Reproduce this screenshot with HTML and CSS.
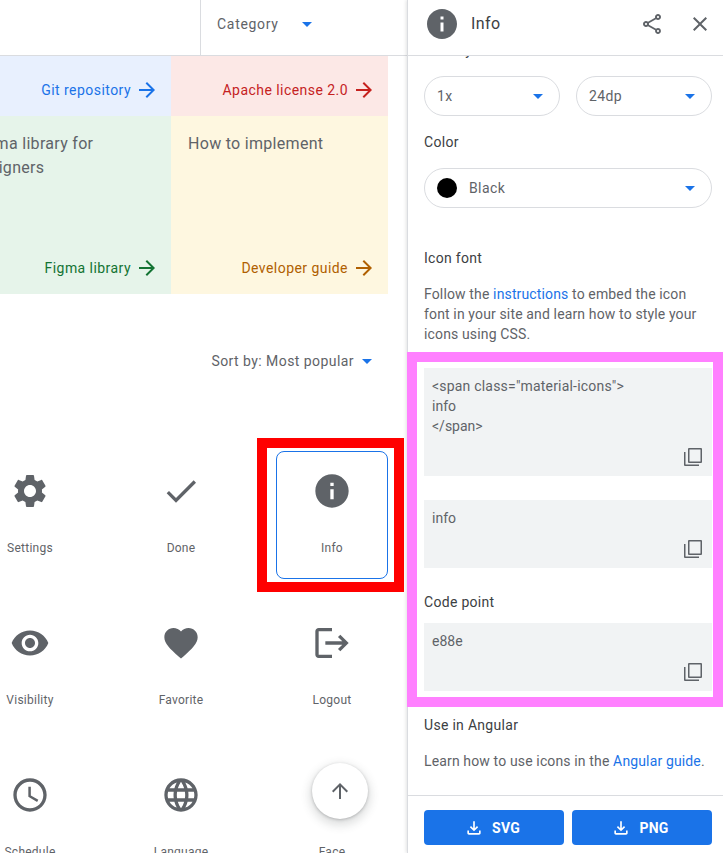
FILE: index.html
```html
<!DOCTYPE html>
<html lang="en">

<head>
  <meta charset="UTF-8" />
  <title>Info icon</title>
  <link rel="stylesheet" href="styles.css">
</head>

<body>
  <div class="page">
    <main class="main">
      <div class="topbar">
        <div class="category">
          <span>Category</span>
          <span class="caret"></span>
        </div>
      </div>

      <div class="cards">
        <div class="card card-blue link-only">
          <a class="card-link">Git repository
            <svg viewBox="0 0 24 24"><path d="M12 4l-1.41 1.41L16.17 11H4v2h12.17l-5.58 5.59L12 20l8-8z" /></svg>
          </a>
        </div>
        <div class="card card-red link-only">
          <a class="card-link">Apache license 2.0
            <svg viewBox="0 0 24 24"><path d="M12 4l-1.41 1.41L16.17 11H4v2h12.17l-5.58 5.59L12 20l8-8z" /></svg>
          </a>
        </div>
        <div class="card card-green">
          <p class="card-title">Figma library for designers</p>
          <a class="card-link">Figma library
            <svg viewBox="0 0 24 24"><path d="M12 4l-1.41 1.41L16.17 11H4v2h12.17l-5.58 5.59L12 20l8-8z" /></svg>
          </a>
        </div>
        <div class="card card-yellow">
          <p class="card-title">How to implement</p>
          <a class="card-link">Developer guide
            <svg viewBox="0 0 24 24"><path d="M12 4l-1.41 1.41L16.17 11H4v2h12.17l-5.58 5.59L12 20l8-8z" /></svg>
          </a>
        </div>
      </div>

      <div class="sort">
        <span>Sort by: Most popular</span>
        <span class="caret"></span>
      </div>

      <div class="icons">
        <div class="icon-cell">
          <svg viewBox="0 0 24 24"><path d="M19.14,12.94c0.04-0.3,0.06-0.61,0.06-0.94c0-0.32-0.02-0.64-0.07-0.94l2.03-1.58c0.18-0.14,0.23-0.41,0.12-0.61l-1.92-3.32c-0.12-0.22-0.37-0.29-0.59-0.22l-2.39,0.96c-0.5-0.38-1.03-0.7-1.62-0.94L14.4,2.81c-0.04-0.24-0.24-0.41-0.48-0.41h-3.84c-0.24,0-0.43,0.17-0.47,0.41L9.25,5.35C8.66,5.59,8.12,5.92,7.63,6.29L5.24,5.33c-0.22-0.08-0.47,0-0.59,0.22L2.74,8.87C2.62,9.08,2.66,9.34,2.86,9.48l2.03,1.58C4.84,11.36,4.8,11.69,4.8,12s0.02,0.64,0.07,0.94l-2.03,1.58c-0.18,0.14-0.23,0.41-0.12,0.61l1.92,3.32c0.12,0.22,0.37,0.29,0.59,0.22l2.39-0.96c0.5,0.38,1.03,0.7,1.62,0.94l0.36,2.54c0.05,0.24,0.24,0.41,0.48,0.41h3.84c0.24,0,0.44-0.17,0.47-0.41l0.36-2.54c0.59-0.24,1.13-0.56,1.62-0.94l2.39,0.96c0.22,0.08,0.47,0,0.59-0.22l1.92-3.32c0.12-0.22,0.07-0.47-0.12-0.61L19.14,12.94z M12,15.6c-1.98,0-3.6-1.62-3.6-3.6s1.62-3.6,3.6-3.6s3.6,1.62,3.6,3.6S13.98,15.6,12,15.6z" /></svg>
          <span>Settings</span>
        </div>
        <div class="icon-cell">
          <svg viewBox="0 0 24 24"><path d="M9 16.2L4.8 12l-1.4 1.4L9 19 21 7l-1.4-1.4L9 16.2z" /></svg>
          <span>Done</span>
        </div>
        <div class="icon-cell selected">
          <svg viewBox="0 0 24 24"><path d="M12 2C6.48 2 2 6.48 2 12s4.48 10 10 10 10-4.48 10-10S17.52 2 12 2zm1 15h-2v-6h2v6zm0-8h-2V7h2v2z" /></svg>
          <span>Info</span>
        </div>
        <div class="icon-cell">
          <svg viewBox="0 0 24 24"><path d="M12 4.5C7 4.5 2.73 7.61 1 12c1.73 4.39 6 7.5 11 7.5s9.27-3.11 11-7.5c-1.73-4.39-6-7.5-11-7.5zM12 17c-2.76 0-5-2.24-5-5s2.24-5 5-5 5 2.24 5 5-2.24 5-5 5zm0-8c-1.66 0-3 1.34-3 3s1.34 3 3 3 3-1.34 3-3-1.34-3-3-3z" /></svg>
          <span>Visibility</span>
        </div>
        <div class="icon-cell">
          <svg viewBox="0 0 24 24"><path d="M12 21.35l-1.45-1.32C5.4 15.36 2 12.28 2 8.5 2 5.42 4.42 3 7.5 3c1.74 0 3.41.81 4.5 2.09C13.09 3.81 14.76 3 16.5 3 19.58 3 22 5.42 22 8.5c0 3.78-3.4 6.86-8.55 11.54L12 21.35z" /></svg>
          <span>Favorite</span>
        </div>
        <div class="icon-cell">
          <svg viewBox="0 0 24 24"><path d="M17 7l-1.41 1.41L18.17 11H8v2h10.17l-2.58 2.58L17 17l5-5zM4 5h8V3H4c-1.1 0-2 .9-2 2v14c0 1.1.9 2 2 2h8v-2H4V5z" /></svg>
          <span>Logout</span>
        </div>
        <div class="icon-cell">
          <svg viewBox="0 0 24 24"><path d="M11.99 2C6.47 2 2 6.48 2 12s4.47 10 9.99 10C17.52 22 22 17.52 22 12S17.52 2 11.99 2zM12 20c-4.42 0-8-3.58-8-8s3.58-8 8-8 8 3.58 8 8-3.58 8-8 8zm.5-13H11v6l5.25 3.15.75-1.23-4.5-2.67z" /></svg>
          <span>Schedule</span>
        </div>
        <div class="icon-cell">
          <svg viewBox="0 0 24 24"><path d="M11.99 2C6.47 2 2 6.48 2 12s4.47 10 9.99 10C17.52 22 22 17.52 22 12S17.52 2 11.99 2zm6.93 6h-2.95c-.32-1.25-.78-2.45-1.38-3.56 1.84.63 3.37 1.91 4.33 3.56zM12 4.04c.83 1.2 1.48 2.53 1.91 3.96h-3.82c.43-1.43 1.08-2.76 1.91-3.96zM4.26 14C4.1 13.36 4 12.69 4 12s.1-1.36.26-2h3.38c-.08.66-.14 1.32-.14 2 0 .68.06 1.34.14 2H4.26zm.82 2h2.95c.32 1.25.78 2.45 1.38 3.56-1.84-.63-3.37-1.9-4.33-3.56zm2.95-8H5.08c.96-1.66 2.49-2.93 4.33-3.56C8.81 5.55 8.35 6.75 8.03 8zM12 19.96c-.83-1.2-1.48-2.53-1.91-3.96h3.82c-.43 1.43-1.08 2.76-1.91 3.96zM14.34 14H9.66c-.09-.66-.16-1.32-.16-2 0-.68.07-1.35.16-2h4.68c.09.65.16 1.32.16 2 0 .68-.07 1.34-.16 2zm.25 5.56c.6-1.11 1.06-2.31 1.38-3.56h2.95c-.96 1.65-2.49 2.93-4.33 3.56zM16.36 14c.08-.66.14-1.32.14-2 0-.68-.06-1.34-.14-2h3.38c.16.64.26 1.31.26 2s-.1 1.36-.26 2h-3.38z" /></svg>
          <span>Language</span>
        </div>
        <div class="icon-cell">
          <svg viewBox="0 0 24 24"></svg>
          <span>Face</span>
        </div>
      </div>

      <!-- Overlays on top of the grid -->
      <div class="mark-red"></div>
      <button class="to-top">
        <svg viewBox="0 0 24 24"><path d="M4 12l1.41 1.41L11 7.83V20h2V7.83l5.58 5.59L20 12l-8-8-8 8z" /></svg>
      </button>
    </main>

    <aside class="panel">
      <div class="panel-head">
        <svg class="head-icon" viewBox="0 0 24 24"><path d="M12 2C6.48 2 2 6.48 2 12s4.48 10 10 10 10-4.48 10-10S17.52 2 12 2zm1 15h-2v-6h2v6zm0-8h-2V7h2v2z" /></svg>
        <span class="head-title">Info</span>
        <svg class="head-btn share" viewBox="0 0 24 24"><path d="M18 16.08c-.76 0-1.44.3-1.96.77L8.91 12.7c.05-.23.09-.46.09-.7s-.04-.47-.09-.7l7.05-4.11c.54.5 1.25.81 2.04.81 1.66 0 3-1.34 3-3s-1.34-3-3-3-3 1.34-3 3c0 .24.04.47.09.7L8.04 9.81C7.5 9.31 6.79 9 6 9c-1.66 0-3 1.34-3 3s1.34 3 3 3c.79 0 1.5-.31 2.04-.81l7.12 4.16c-.05.21-.08.43-.08.65 0 1.61 1.31 2.92 2.92 2.92s2.92-1.31 2.92-2.92-1.31-2.92-2.92-2.92zM18 4c.55 0 1 .45 1 1s-.45 1-1 1-1-.45-1-1 .45-1 1-1zM6 13c-.55 0-1-.45-1-1s.45-1 1-1 1 .45 1 1-.45 1-1 1zm12 7.02c-.55 0-1-.45-1-1s.45-1 1-1 1 .45 1 1-.45 1-1 1z" /></svg>
        <svg class="head-btn" viewBox="0 0 24 24"><path d="M19 6.41L17.59 5 12 10.59 6.41 5 5 6.41 10.59 12 5 17.59 6.41 19 12 13.41 17.59 19 19 17.59 13.41 12z" /></svg>
      </div>

      <div class="panel-body">
        <h3 class="label density">Density</h3>
        <div class="select-row">
          <div class="select"><span>1x</span><span class="caret"></span></div>
          <div class="select"><span>24dp</span><span class="caret"></span></div>
        </div>
        <h3 class="label color-label">Color</h3>
        <div class="select color-select">
          <span class="swatch"></span>
          <span class="color-name">Black</span>
          <span class="caret"></span>
        </div>

        <h3 class="label font-label">Icon font</h3>
        <p class="text">Follow the <a>instructions</a> to embed the icon font in your site and learn how to style your icons using CSS.</p>

        <div class="code code-tall"><span class="code-wide">&lt;span class="material-icons"&gt;</span>
info
&lt;/span&gt;<svg class="copy" viewBox="0 0 24 24"><path fill-rule="evenodd" d="M8 3h12a1 1 0 0 1 1 1v13a1 1 0 0 1-1 1H8a1 1 0 0 1-1-1V4a1 1 0 0 1 1-1zm.5 1.5v12h11v-12z" /><path d="M3 7h1.5v12.5H18V21H4a1 1 0 0 1-1-1z" /></svg></div>
        <div class="code code-short">info<svg class="copy" viewBox="0 0 24 24"><path fill-rule="evenodd" d="M8 3h12a1 1 0 0 1 1 1v13a1 1 0 0 1-1 1H8a1 1 0 0 1-1-1V4a1 1 0 0 1 1-1zm.5 1.5v12h11v-12z" /><path d="M3 7h1.5v12.5H18V21H4a1 1 0 0 1-1-1z" /></svg></div>

        <h3 class="label point-label">Code point</h3>
        <div class="code code-short">e88e<svg class="copy" viewBox="0 0 24 24"><path fill-rule="evenodd" d="M8 3h12a1 1 0 0 1 1 1v13a1 1 0 0 1-1 1H8a1 1 0 0 1-1-1V4a1 1 0 0 1 1-1zm.5 1.5v12h11v-12z" /><path d="M3 7h1.5v12.5H18V21H4a1 1 0 0 1-1-1z" /></svg></div>

        <h3 class="label angular-label">Use in Angular</h3>
        <p class="text">Learn how to use icons in the <a>Angular guide</a>.</p>
      </div>

      <div class="panel-foot">
        <button class="download">
          <svg viewBox="0 0 24 24"><path d="M18 15v3H6v-3H4v3c0 1.1.9 2 2 2h12c1.1 0 2-.9 2-2v-3h-2zm-1-4l-1.41-1.41L13 12.17V4h-2v8.17L8.41 9.59 7 11l5 5 5-5z" /></svg>
          SVG
        </button>
        <button class="download">
          <svg viewBox="0 0 24 24"><path d="M18 15v3H6v-3H4v3c0 1.1.9 2 2 2h12c1.1 0 2-.9 2-2v-3h-2zm-1-4l-1.41-1.41L13 12.17V4h-2v8.17L8.41 9.59 7 11l5 5 5-5z" /></svg>
          PNG
        </button>
      </div>

      <div class="mark-pink"></div>
    </aside>
  </div>
</body>

</html>
```

FILE: styles.css
```css
* {
  margin: 0;
  padding: 0;
  box-sizing: border-box;
}

html,
body {
  height: 100%;
  overflow: hidden;
}

body {
  background: #fff;
  color: #5f6368;
  font-family: Roboto, 'Liberation Sans', sans-serif;
  font-size: 14px;
}

.page {
  display: flex;
  height: 853px;
}

.caret {
  width: 0;
  height: 0;
  border-left: 5px solid transparent;
  border-right: 5px solid transparent;
  border-top: 5px solid #1a73e8;
}

/* Left column */
.main {
  position: relative;
  width: 407px;
  flex-shrink: 0;
  overflow: hidden;
}

.topbar {
  display: flex;
  justify-content: flex-end;
  height: 56px;
  border-bottom: 1px solid #dadce0;
}

.category {
  display: flex;
  align-items: center;
  gap: 23px;
  width: 207px;
  padding: 0 0 7px 16px;
  border-left: 1px solid #dadce0;
  letter-spacing: 0.7px;
}

.cards {
  display: grid;
  grid-template-columns: 217px 217px;
  grid-template-rows: 60px 178px;
  margin-left: -46px;
}

.card {
  display: flex;
  flex-direction: column;
  justify-content: space-between;
  padding: 16px 12px 16px 17px;
}

.card.link-only {
  justify-content: flex-end;
}

.card-blue {
  background: #e8f0fe;
  color: #1a73e8;
}

.card-red {
  background: #fce8e6;
  color: #c5221f;
}

.card-green {
  background: #e6f4ea;
  color: #137333;
}

.card-green .card-title {
  margin-left: 1px;
}

.card-yellow {
  background: #fef7e0;
  color: #b06000;
}

.card-title {
  width: 170px;
  color: #5f6368;
  font-size: 16px;
  line-height: 24px;
  letter-spacing: 0.3px;
}

.card-link {
  display: flex;
  align-items: center;
  justify-content: flex-end;
  gap: 4px;
  height: 20px;
  letter-spacing: 0.45px;
}

.card-link svg {
  width: 24px;
  height: 24px;
  fill: currentColor;
}

.sort {
  display: flex;
  align-items: center;
  justify-content: flex-end;
  gap: 8px;
  height: 20px;
  margin: 57px 35px 0 0;
  letter-spacing: 0.44px;
}

.icons {
  display: grid;
  grid-template-columns: repeat(3, 112px);
  grid-auto-rows: 128px;
  column-gap: 39px;
  row-gap: 24px;
  margin: 80px 0 0 -26px;
}

.icon-cell {
  display: flex;
  flex-direction: column;
  align-items: center;
  padding-top: 19px;
  border: 1px solid transparent;
  border-radius: 8px;
  font-size: 12px;
  line-height: 16px;
  letter-spacing: 0.25px;
}

.icon-cell svg {
  width: 40px;
  height: 40px;
  margin-bottom: 29px;
  fill: #5f6368;
}

.icon-cell.selected {
  border-color: #1a73e8;
}

.mark-red {
  position: absolute;
  left: 257px;
  top: 438px;
  width: 147px;
  height: 154px;
  border: 10px solid #ff0000;
}

.to-top {
  position: absolute;
  left: 312px;
  top: 763px;
  width: 56px;
  height: 56px;
  border: none;
  border-radius: 50%;
  background: #fff;
  box-shadow: 0 1px 3px rgba(60, 64, 67, 0.3), 0 4px 8px 3px rgba(60, 64, 67, 0.15);
}

.to-top svg {
  display: block;
  width: 24px;
  height: 24px;
  margin: 0 auto;
  fill: #5f6368;
}

/* Right panel */
.panel {
  position: relative;
  display: flex;
  flex-direction: column;
  flex: 1;
  border-left: 1px solid #dadce0;
  box-shadow: -1px 0 3px rgba(60, 64, 67, 0.15);
}

.panel-head {
  position: relative;
  z-index: 1;
  display: flex;
  align-items: center;
  height: 56px;
  flex-shrink: 0;
  padding: 0 11px 8px 16px;
  background: #fff;
  border-bottom: 1px solid #dadce0;
}

.head-icon {
  width: 36px;
  height: 36px;
  fill: #5f6368;
}

.head-title {
  flex: 1;
  margin-left: 11px;
  color: #3c4043;
  font-size: 16px;
  letter-spacing: 0.4px;
}

.head-btn {
  width: 24px;
  height: 24px;
  margin-left: 24px;
  fill: #5f6368;
}

.panel-body {
  flex: 1;
  overflow: hidden;
  padding: 0 11px 0 16px;
}

.label {
  color: #3c4043;
  font-size: 14px;
  font-weight: 400;
  line-height: 20px;
  letter-spacing: 0.3px;
}

.density {
  margin-top: -16px;
}

.select-row {
  display: flex;
  gap: 16px;
  margin-top: 16px;
}

.select {
  display: flex;
  align-items: center;
  justify-content: space-between;
  flex: 1;
  height: 40px;
  padding: 0 16px 0 12px;
  border: 1px solid #dadce0;
  border-radius: 20px;
  letter-spacing: 0.4px;
}

.color-label {
  margin-top: 16px;
}

.color-select {
  flex: none;
  margin-top: 16px;
}

.swatch {
  width: 20px;
  height: 20px;
  border-radius: 50%;
  background: #000;
}

.color-name {
  flex: 1;
  margin-left: 12px;
}

.font-label {
  margin-top: 40px;
}

.text {
  margin-top: 16px;
  color: #5f6368;
  line-height: 20px;
  letter-spacing: 0.14px;
}

.text a {
  color: #1a73e8;
}

.code {
  position: relative;
  padding: 8px;
  background: #f1f3f4;
  color: #5f6368;
  font-size: 14px;
  line-height: 20px;
  white-space: pre-wrap;
}

.code-wide {
  letter-spacing: 0.2px;
}

.code-tall {
  height: 108px;
  margin-top: 24px;
}

.code-short {
  height: 68px;
  margin-top: 24px;
}

.copy {
  position: absolute;
  right: 7px;
  bottom: 7px;
  width: 24px;
  height: 24px;
  fill: #5f6368;
}

.point-label {
  margin-top: 24px;
}

.point-label + .code-short {
  margin-top: 11px;
}

.angular-label {
  margin-top: 24px;
}

.panel-foot {
  display: flex;
  gap: 8px;
  height: 58px;
  flex-shrink: 0;
  padding: 14px 11px 0 16px;
  border-top: 1px solid #dadce0;
}

.download {
  display: flex;
  align-items: center;
  justify-content: center;
  gap: 8px;
  flex: 1;
  height: 35px;
  padding-right: 4px;
  border: none;
  border-radius: 4px;
  background: #1a73e8;
  color: #fff;
  font-family: Roboto, 'Liberation Sans', sans-serif;
  font-size: 14px;
  font-weight: 700;
  letter-spacing: 0.2px;
}

.download svg {
  width: 20px;
  height: 20px;
  fill: #fff;
}

.mark-pink {
  position: absolute;
  z-index: 2;
  left: -1px;
  top: 352px;
  width: 316px;
  height: 355px;
  border: 10px solid #ff80ff;
}
```
